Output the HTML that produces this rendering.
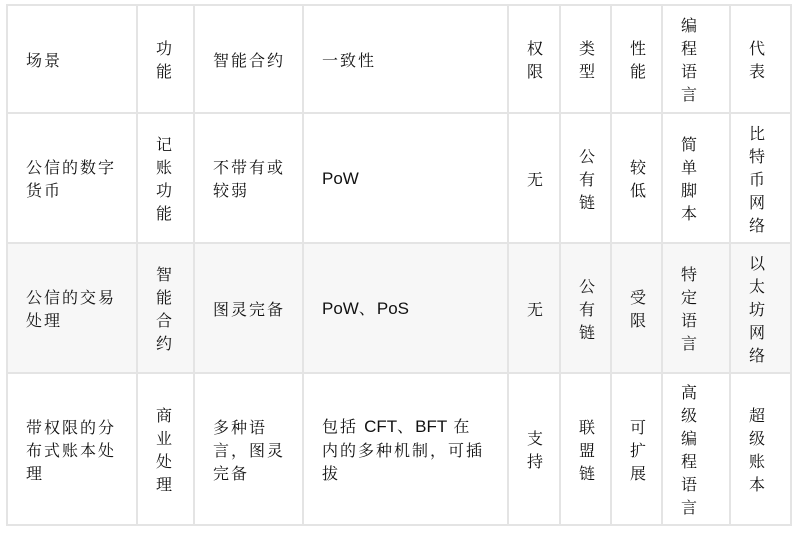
<!DOCTYPE html>
<html><head><meta charset="utf-8"><style>
body{margin:0;background:#fff;}
table{position:absolute;left:6px;top:4px;border-collapse:collapse;table-layout:fixed;width:786px;
font-family:"Noto Serif CJK SC","Noto Sans CJK SC",serif;font-size:16px;color:#111;line-height:23px;}
td{border:2px solid #e4e4e4;padding:0 0 0 18px;vertical-align:middle;letter-spacing:2px;}
tr.g td{background:#f7f7f7;}
.l{font-family:"Liberation Sans",sans-serif;font-size:17px;letter-spacing:0;}
</style></head><body>
<table>
<colgroup><col style="width:130px"><col style="width:57px"><col style="width:109px"><col style="width:205px"><col style="width:52px"><col style="width:51px"><col style="width:51px"><col style="width:68px"><col style="width:61px"></colgroup>
<tr style="height:108px"><td>场景</td><td>功<br>能</td><td>智能合约</td><td>一致性</td><td>权<br>限</td><td>类<br>型</td><td>性<br>能</td><td>编<br>程<br>语<br>言</td><td>代<br>表</td></tr>
<tr style="height:130px"><td>公信的数字<br>货币</td><td>记<br>账<br>功<br>能</td><td>不带有或<br>较弱</td><td><span class="l">PoW</span></td><td>无</td><td>公<br>有<br>链</td><td>较<br>低</td><td>简<br>单<br>脚<br>本</td><td>比<br>特<br>币<br>网<br>络</td></tr>
<tr class="g" style="height:130px"><td>公信的交易<br>处理</td><td>智<br>能<br>合<br>约</td><td>图灵完备</td><td><span class="l">PoW</span>、<span class="l">PoS</span></td><td>无</td><td>公<br>有<br>链</td><td>受<br>限</td><td>特<br>定<br>语<br>言</td><td>以<br>太<br>坊<br>网<br>络</td></tr>
<tr style="height:152px"><td>带权限的分<br>布式账本处<br>理</td><td>商<br>业<br>处<br>理</td><td>多种语<br>言，图灵<br>完备</td><td>包括 <span class="l">CFT</span>、<span class="l">BFT</span> 在<br>内的多种机制，可插<br>拔</td><td>支<br>持</td><td>联<br>盟<br>链</td><td>可<br>扩<br>展</td><td>高<br>级<br>编<br>程<br>语<br>言</td><td>超<br>级<br>账<br>本</td></tr>
</table>
</body></html>
